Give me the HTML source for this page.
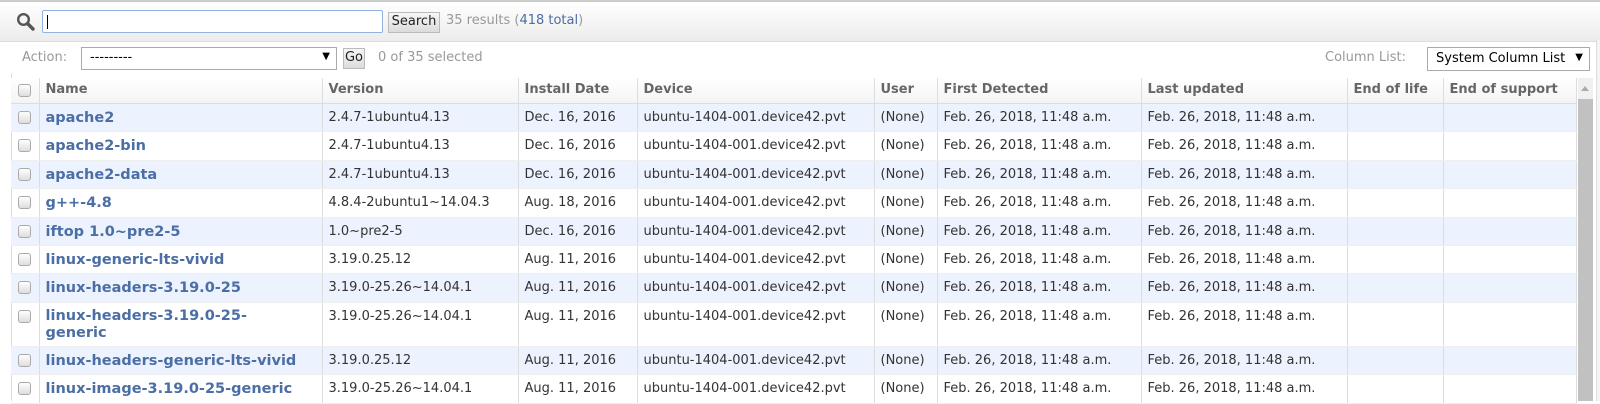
<!DOCTYPE html>
<html><head><meta charset="utf-8"><style>
*{box-sizing:border-box;margin:0;padding:0}
body{width:1600px;height:401px;overflow:hidden;background:#fff;font-family:"DejaVu Sans",Verdana,"Liberation Sans",sans-serif;font-size:13px;color:#333;position:relative}
.abs{position:absolute}
.topbar{left:0;top:0;width:1600px;height:41px;background:linear-gradient(#fff,#ececec);border-top:2px solid #ccc}
.inp{border:1px solid #8fb2e0;background:#fff;border-radius:2px}
.btn{background:linear-gradient(#f6f6f6,#dcdcdc);border:1px solid #bbb;font-size:13px;text-align:center;line-height:18px;color:#222}
.grey{color:#999}
table{position:absolute;left:11px;top:78px;border-collapse:collapse;table-layout:fixed;width:1565px}
td,th{border-right:1px solid #ddd;padding:0 6px;vertical-align:top;white-space:nowrap;overflow:hidden}
th{height:22px;text-align:left;color:#666;font-weight:bold;border-bottom:1px solid #ddd;background:linear-gradient(#fff,#f4f4f4);line-height:18px;padding-top:3px}
td{height:28.4px;line-height:18px;padding-top:5px;border-bottom:1px solid #eee}
tr.a td{background:#edf3fe}
td a{color:#4b6ea5;font-weight:bold;text-decoration:none;font-size:14.5px}
.cb{width:13px;height:13px;border:1px solid #aaa;border-radius:3px;background:linear-gradient(#fff,#ddd);display:inline-block;margin-top:2px}
</style></head><body>
<div class="abs topbar"></div>
<div class="abs" style="left:0;top:41px;width:1600px;height:1px;background:#ddd"></div>
<svg class="abs" style="left:16px;top:12px" width="20" height="20" viewBox="0 0 20 20"><circle cx="7.5" cy="7.5" r="5.3" fill="none" stroke="#555" stroke-width="2.4"/><path d="M11.5 11.5L17 17" stroke="#555" stroke-width="3.4" stroke-linecap="round"/></svg>
<div class="abs inp" style="left:42px;top:10px;width:341px;height:23px"><div class="abs" style="left:4px;top:4px;width:1px;height:14px;background:#000"></div></div>
<div class="abs btn" style="left:388px;top:12px;width:52px;height:21px">Search</div>
<div class="abs grey" style="left:446px;top:13px">35 results (<span style="color:#4b6ea5">418 total</span>)</div>
<div class="abs grey" style="left:22px;top:50px">Action:</div>
<div class="abs" style="left:81px;top:47px;width:256px;height:23px;border:1px solid #aaa;background:#fff"><span class="abs" style="left:8px;top:2px;color:#000">---------</span><span class="abs" style="right:6px;top:3px;font-size:10px;color:#000">▼</span></div>
<div class="abs btn" style="left:343px;top:48px;width:22px;height:21px">Go</div>
<div class="abs grey" style="left:378px;top:50px">0 of 35 selected</div>
<div class="abs grey" style="left:1325px;top:50px">Column List:</div>
<div class="abs" style="left:1427px;top:47px;width:163px;height:24px;border:1px solid #aaa;background:#fff"><span class="abs" style="left:8px;top:3px;color:#000">System Column List</span><span class="abs" style="right:6px;top:4px;font-size:10px;color:#000">▼</span></div>
<div class="abs" style="left:11px;top:73px;width:1px;height:328px;background:#ddd"></div>
<div class="abs" style="left:1578px;top:78px;width:15px;height:323px;background:#f0f0f0"></div>
<div class="abs" style="left:1578px;top:99px;width:15px;height:302px;background:#c1c1c1"></div>
<div class="abs" style="left:1581px;top:86px;width:0;height:0;border-left:4px solid transparent;border-right:4px solid transparent;border-bottom:5px solid #aaa"></div>
<div class="abs" style="left:1596px;top:40px;width:4px;height:361px;background:#f4f4f4;border-left:1px solid #ddd"></div>
<table>
<colgroup><col style="width:28px"><col style="width:283px"><col style="width:196px"><col style="width:119px"><col style="width:237px"><col style="width:63px"><col style="width:204px"><col style="width:206px"><col style="width:96px"><col style="width:133px"></colgroup>
<tr><th style="padding:4px 0 0 7px"><span class="cb"></span></th><th>Name</th><th>Version</th><th>Install Date</th><th>Device</th><th>User</th><th>First Detected</th><th>Last updated</th><th>End of life</th><th>End of support</th></tr>
<tr class="a"><td style="padding-left:7px"><span class="cb"></span></td><td><a>apache2</a></td><td>2.4.7-1ubuntu4.13</td><td>Dec. 16, 2016</td><td>ubuntu-1404-001.device42.pvt</td><td>(None)</td><td>Feb. 26, 2018, 11:48 a.m.</td><td>Feb. 26, 2018, 11:48 a.m.</td><td></td><td></td></tr>
<tr><td style="padding-left:7px"><span class="cb"></span></td><td><a>apache2-bin</a></td><td>2.4.7-1ubuntu4.13</td><td>Dec. 16, 2016</td><td>ubuntu-1404-001.device42.pvt</td><td>(None)</td><td>Feb. 26, 2018, 11:48 a.m.</td><td>Feb. 26, 2018, 11:48 a.m.</td><td></td><td></td></tr>
<tr class="a"><td style="padding-left:7px"><span class="cb"></span></td><td><a>apache2-data</a></td><td>2.4.7-1ubuntu4.13</td><td>Dec. 16, 2016</td><td>ubuntu-1404-001.device42.pvt</td><td>(None)</td><td>Feb. 26, 2018, 11:48 a.m.</td><td>Feb. 26, 2018, 11:48 a.m.</td><td></td><td></td></tr>
<tr><td style="padding-left:7px"><span class="cb"></span></td><td><a>g++-4.8</a></td><td>4.8.4-2ubuntu1~14.04.3</td><td>Aug. 18, 2016</td><td>ubuntu-1404-001.device42.pvt</td><td>(None)</td><td>Feb. 26, 2018, 11:48 a.m.</td><td>Feb. 26, 2018, 11:48 a.m.</td><td></td><td></td></tr>
<tr class="a"><td style="padding-left:7px"><span class="cb"></span></td><td><a>iftop 1.0~pre2-5</a></td><td>1.0~pre2-5</td><td>Dec. 16, 2016</td><td>ubuntu-1404-001.device42.pvt</td><td>(None)</td><td>Feb. 26, 2018, 11:48 a.m.</td><td>Feb. 26, 2018, 11:48 a.m.</td><td></td><td></td></tr>
<tr><td style="padding-left:7px"><span class="cb"></span></td><td><a>linux-generic-lts-vivid</a></td><td>3.19.0.25.12</td><td>Aug. 11, 2016</td><td>ubuntu-1404-001.device42.pvt</td><td>(None)</td><td>Feb. 26, 2018, 11:48 a.m.</td><td>Feb. 26, 2018, 11:48 a.m.</td><td></td><td></td></tr>
<tr class="a"><td style="padding-left:7px"><span class="cb"></span></td><td><a>linux-headers-3.19.0-25</a></td><td>3.19.0-25.26~14.04.1</td><td>Aug. 11, 2016</td><td>ubuntu-1404-001.device42.pvt</td><td>(None)</td><td>Feb. 26, 2018, 11:48 a.m.</td><td>Feb. 26, 2018, 11:48 a.m.</td><td></td><td></td></tr>
<tr><td style="padding-left:7px;height:44px"><span class="cb"></span></td><td style="line-height:16px"><a>linux-headers-3.19.0-25-<br>generic</a></td><td>3.19.0-25.26~14.04.1</td><td>Aug. 11, 2016</td><td>ubuntu-1404-001.device42.pvt</td><td>(None)</td><td>Feb. 26, 2018, 11:48 a.m.</td><td>Feb. 26, 2018, 11:48 a.m.</td><td></td><td></td></tr>
<tr class="a"><td style="padding-left:7px"><span class="cb"></span></td><td><a>linux-headers-generic-lts-vivid</a></td><td>3.19.0.25.12</td><td>Aug. 11, 2016</td><td>ubuntu-1404-001.device42.pvt</td><td>(None)</td><td>Feb. 26, 2018, 11:48 a.m.</td><td>Feb. 26, 2018, 11:48 a.m.</td><td></td><td></td></tr>
<tr><td style="padding-left:7px"><span class="cb"></span></td><td><a>linux-image-3.19.0-25-generic</a></td><td>3.19.0-25.26~14.04.1</td><td>Aug. 11, 2016</td><td>ubuntu-1404-001.device42.pvt</td><td>(None)</td><td>Feb. 26, 2018, 11:48 a.m.</td><td>Feb. 26, 2018, 11:48 a.m.</td><td></td><td></td></tr>
</table>
</body></html>
